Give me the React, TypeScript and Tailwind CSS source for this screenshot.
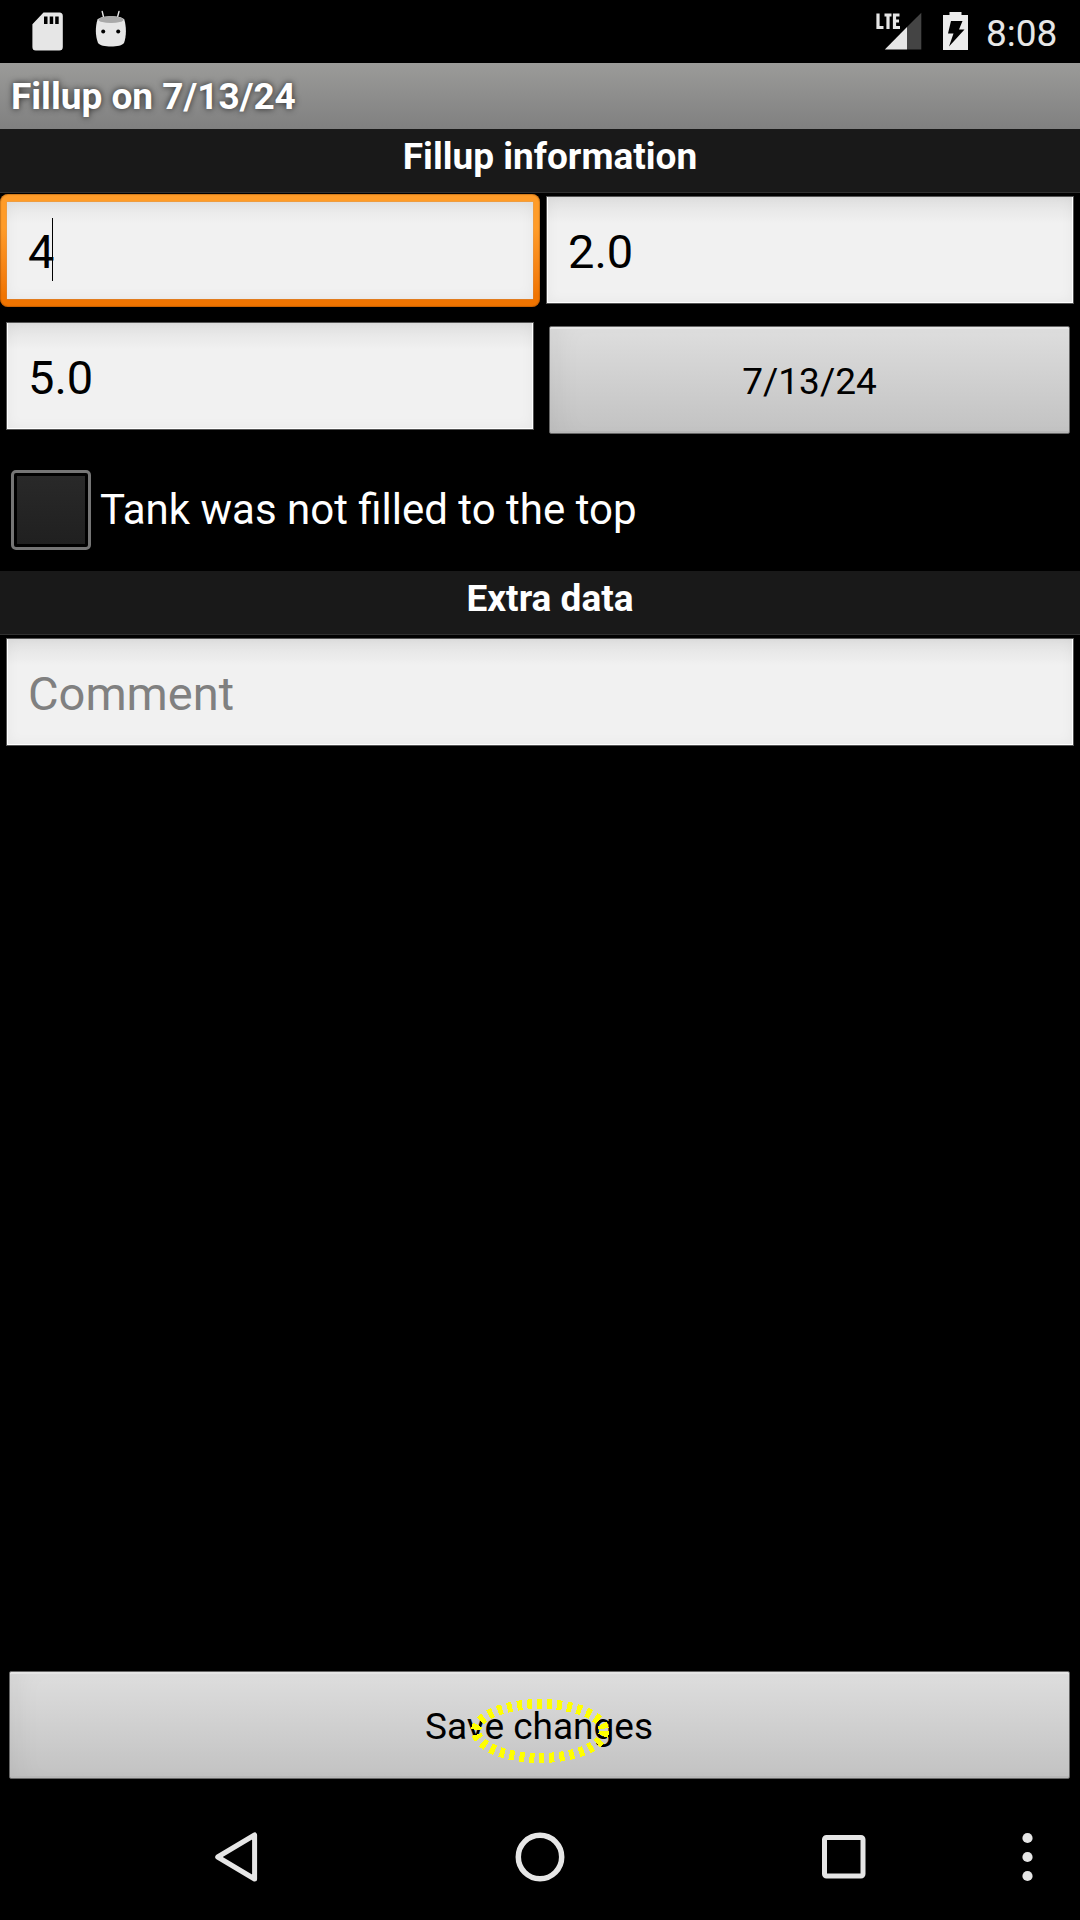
import React from "react";

function StatusBar() {
  return (
    <header className="flex h-[63px] items-start justify-between bg-black">
      <div className="flex pl-[32px]">
        <svg className="mt-[12px] h-[39px] w-[31px]" viewBox="0 0 31 39">
          <path
            fill="#e6e6e6"
            fillRule="evenodd"
            d="M11.5.5H27.500a3.500 3.500 0 0 1 3.300 3.500V35a3.500 3.500 0 0 1-3.500 3.500H4A3.500 3.500 0 0 1 .4 35V12.200zM12 4.500V12h3.500V4.500zM17.700 4.500V12h3.500V4.500zM23.200 4.500V12h3.500V4.500z"
          />
        </svg>
        <svg className="ml-[32px] mt-[10px] h-[37px] w-[32px]" viewBox="0 0 32 37">
          <path d="M7.200 1.500 9 9M24 1.500 22 9" stroke="#e6e6e6" strokeWidth="1.400" strokeLinecap="round" />
          <path fill="#e6e6e6" d="M2.500 9.500C.2 17 .2 26 3 33c3 4.800 23 4.800 26 0 2.500-7 2.500-16 .3-23.500C26.500 5 6 5 2.500 9.500z" />
          <ellipse cx="16" cy="9.700" rx="12.500" ry="3.400" fill="#a9a9a9" />
          <circle cx="8.200" cy="21.500" r="2" fill="#000" />
          <circle cx="23.200" cy="21.500" r="2" fill="#000" />
        </svg>
      </div>
      <div className="flex pr-[21px]">
        <svg className="mt-[12px] h-[39px] w-[46px]" viewBox="0 0 46 39">
          <path fill="#444" d="M45.300.8V37.400H31V15z" />
          <path fill="#e6e6e6" d="M31 15V37.400H8.800z" />
          <path
            d="M2 1.500V15.500H7.500M8.500 3H15.500M12 3V17M23.500 3H18.500V15.500H24M18.500 9H23"
            fill="none"
            stroke="#e6e6e6"
            strokeWidth="3.200"
          />
        </svg>
        <svg className="ml-[21px] mt-[12px] h-[38px] w-[25px]" viewBox="0 0 25 38">
          <path fill="#ececec" d="M6.500 0H18.500V3H25V38H0V3H6.500z" />
          <path fill="#000" d="M8 9H19.500L16 17.500H21.500L6 34.500 10.500 21.500H5z" />
        </svg>
        <div className="ml-[18px] mt-[12px] w-[73px] whitespace-nowrap text-[37px] leading-[43px] text-[#e6e6e6]">8:08</div>
      </div>
    </header>
  );
}

function SectionHeader({ children }: { children: React.ReactNode }) {
  return (
    <h2 className="h-[64px] border-b border-[#303030] bg-[#191919] pl-[20px] text-center text-[37px] font-bold leading-[55px] text-white">
      {children}
    </h2>
  );
}

function Field({ children, className = "" }: { children: React.ReactNode; className?: string }) {
  return (
    <div
      className={
        "flex h-[108px] items-center border border-[#555] bg-[#f1f1f1] bg-linear-to-b from-[#e1e1e1] to-[#f1f1f1] to-25% px-[21px] pt-[4px] text-[47px] leading-[56px] text-black shadow-[inset_1px_-1px_0_#fff,inset_-1px_0_0_#fff,inset_0_0_14px_rgba(0,0,0,0.05)] " +
        className
      }
    >
      {children}
    </div>
  );
}

function GrayButton({ children, className = "" }: { children: React.ReactNode; className?: string }) {
  return (
    <button
      className={
        "relative flex h-[108px] items-center justify-center rounded-[2px] border border-[#666] bg-linear-to-b from-[#dedede] to-[#c2c2c2] pt-[2px] text-[37px] leading-[43px] text-black shadow-[inset_0_2px_0_#e6e6e6,inset_0_-2px_0_#b8b8b8,inset_20px_0_30px_-16px_rgba(0,0,0,0.06)] " +
        className
      }
    >
      {children}
    </button>
  );
}

function NavBar() {
  return (
    <nav className="flex h-[126px] items-center pb-[1px]">
      <svg className="ml-[214px] h-[52px] w-[46px]" viewBox="0 0 46 52">
        <path d="M40.600 4V48L3.700 26z" fill="none" stroke="#e6e6e6" strokeWidth="5" strokeLinejoin="round" />
      </svg>
      <svg className="ml-[254px] h-[52px] w-[52px]" viewBox="0 0 52 52">
        <circle cx="26" cy="26" r="21.700" fill="none" stroke="#e6e6e6" strokeWidth="5.500" />
      </svg>
      <svg className="ml-[252px] h-[52px] w-[52px]" viewBox="0 0 52 52">
        <rect x="6.500" y="6.500" width="38.500" height="38.500" rx="2" fill="none" stroke="#e6e6e6" strokeWidth="5" />
      </svg>
      <svg className="ml-[151px] h-[52px] w-[12px]" viewBox="0 0 12 52">
        <g fill="#e6e6e6">
          <circle cx="6.500" cy="7" r="5.100" />
          <circle cx="6.500" cy="26" r="5.100" />
          <circle cx="6.500" cy="45" r="5.100" />
        </g>
      </svg>
    </nav>
  );
}

export default function App() {
  return (
    <div className="flex h-[1920px] w-[1080px] flex-col overflow-hidden bg-black font-[Roboto,sans-serif]">
      <StatusBar />
      <h1 className="h-[66px] bg-linear-to-b from-[#9b9b99] to-[#808080] pl-[11px] text-[37px] font-bold leading-[68px] text-white [text-shadow:0_0_6px_rgba(0,0,0,0.75)]">
        Fillup on 7/13/24
      </h1>
      <SectionHeader>Fillup information</SectionHeader>

      <div className="flex h-[129px] items-start pt-[1px]">
        <div className="h-[113px] w-[540px] rounded-[8px] bg-linear-to-b from-[#ff9c29] from-30% to-[#f07400] to-90% px-[7px] py-[8px] shadow-[inset_0_0_1px_1px_rgba(120,60,0,0.35)]">
          <div className="flex h-[97px] items-center bg-[#f1f1f1] bg-linear-to-b from-[#e6e6e6] to-[#f1f1f1] to-22% pl-[21px] pt-[3px] text-[47px] leading-[56px] text-black shadow-[0_0_1px_#a0a8b0,inset_0_0_14px_rgba(0,0,0,0.05)]">
            4<span className="mb-[5px] -ml-[2px] h-[63px] w-px bg-black" />
          </div>
        </div>
        <Field className="ml-[6px] mt-[2px] w-[528px]">2.0</Field>
      </div>
      <div className="flex h-[136px] items-start pl-[6px]">
        <Field className="w-[528px]">5.0</Field>
        <GrayButton className="ml-[15px] mt-[4px] w-[521px]">7/13/24</GrayButton>
      </div>
      <label className="flex h-[113px] items-start pl-[11px] pt-[12px]">
        <span className="h-[80px] w-[80px] rounded-[5px] border-[3px] border-[#757575] p-[3px]">
          <span className="block size-full bg-linear-to-b from-[#292929] to-[#202020]" />
        </span>
        <span className="ml-[9px] mt-[14px] text-[42px] leading-[52px] text-white">Tank was not filled to the top</span>
      </label>

      <SectionHeader>Extra data</SectionHeader>
      <div className="px-[6px] pt-[3px]">
        <Field className="w-full">
          <span className="text-[#808080]">Comment</span>
        </Field>
      </div>

      <div className="mt-auto flex pb-[15px] pl-[9px] pr-[10px]">
        <GrayButton className="w-full">
          <span className="pr-[1px]">Save changes</span>
          <svg className="absolute left-[460px] top-[24px] h-[70px] w-[140px]" viewBox="0 0 140 70">
            <ellipse
              cx="70"
              cy="35"
              rx="64"
              ry="27"
              fill="none"
              stroke="#ff0"
              strokeWidth="10"
              strokeDasharray="5 5"
              shapeRendering="crispEdges"
            />
          </svg>
        </GrayButton>
      </div>
      <NavBar />
    </div>
  );
}
